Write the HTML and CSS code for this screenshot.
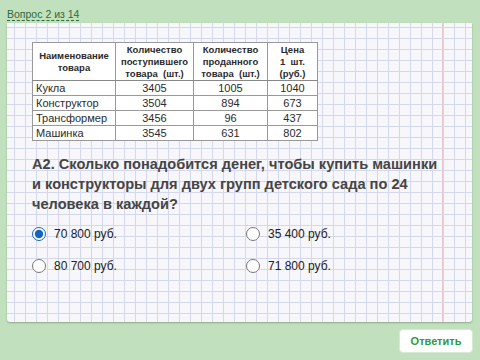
FILE: index.html
```html
<!DOCTYPE html>
<html lang="ru">
<head>
  <meta charset="UTF-8" />
  <title>Тест</title>
  <link rel="stylesheet" href="styles.css">
</head>
<body>
  <div class="top">
    <a class="counter" href="#">Вопрос 2 из 14</a>
  </div>
  <div class="paper">
    <table class="goods">
      <tr>
        <th class="c1">Наименование<br>товара</th>
        <th class="c2">Количество<br>поступившего<br>товара&nbsp; (шт.)</th>
        <th class="c3">Количество<br>проданного<br>товара&nbsp; (шт.)</th>
        <th class="c4">Цена<br>1&nbsp; шт.<br>(руб.)</th>
      </tr>
      <tr><td>Кукла</td><td>3405</td><td>1005</td><td>1040</td></tr>
      <tr><td>Конструктор</td><td>3504</td><td>894</td><td>673</td></tr>
      <tr><td>Трансформер</td><td>3456</td><td>96</td><td>437</td></tr>
      <tr><td>Машинка</td><td>3545</td><td>631</td><td>802</td></tr>
    </table>
    <p class="question">А2. Сколько понадобится денег, чтобы купить машинки<br>и конструкторы для двух групп детского сада по 24<br>человека в каждой?</p>
    <div class="answers">
      <label class="answer"><input type="radio" name="a" checked><span>70 800 руб.</span></label>
      <label class="answer"><input type="radio" name="a"><span>35 400 руб.</span></label>
      <label class="answer"><input type="radio" name="a"><span>80 700 руб.</span></label>
      <label class="answer"><input type="radio" name="a"><span>71 800 руб.</span></label>
    </div>
  </div>
  <div class="footer">
    <button class="submit">Ответить</button>
  </div>
</body>
</html>
```

FILE: styles.css
```css
:root {
  --green-bg: #c1e0bd;
  --paper: #f6f6fb;
  --grid: #d3d8ec;
  --text: #454545;
}
body {
  margin: 0;
  height: 360px;
  font-family: "Liberation Sans", Arial, sans-serif;
  background: var(--green-bg);
  color: var(--text);
  overflow: hidden;
}
.top {
  height: 23px;
  padding-left: 7px;
  box-sizing: border-box;
  padding-top: 4px;
}
.counter {
  font-size: 10.5px;
  color: #2f6a3a;
  text-decoration: none;
  border-bottom: 1px dashed #2f6a3a;
}
.paper {
  margin: 0 8px 0 7px;
  height: 299px;
  box-sizing: border-box;
  padding: 19px 0 0 25px;
  background-color: var(--paper);
  background-image:
    linear-gradient(to right, transparent 435px, #e8c6d0 435px, #e8c6d0 436px, transparent 436px),
    linear-gradient(to right, var(--grid) 1px, transparent 1px),
    linear-gradient(to bottom, var(--grid) 1px, transparent 1px);
  background-size: 100% 100%, 11px 11px, 11px 11px;
  background-position: 0 0, 7px 0, 0 4px;
  box-shadow: 0 1px 2px rgba(0, 0, 0, 0.25);
  border-radius: 0 0 3px 3px;
}
.goods {
  border-collapse: collapse;
  background: #fff;
  border: 1px solid #555;
  font-size: 11px;
  color: #2b2b2b;
}
.goods th {
  font-size: 9.5px;
  font-weight: bold;
  line-height: 12px;
  height: 37px;
  padding: 0;
  border: 1px solid #999;
  border-bottom-color: #888;
}
.goods .c1 { width: 82px; }
.goods .c2 { width: 77px; }
.goods .c3 { width: 73px; }
.goods .c4 { width: 49px; }
.goods td {
  height: 14px;
  padding: 0;
  text-align: center;
  border: 1px solid #999;
}
.goods td:first-child {
  text-align: left;
  padding-left: 3px;
}
.question {
  margin: 13px 0 0;
  font-size: 14.6px;
  font-weight: bold;
  line-height: 20px;
  white-space: nowrap;
  color: var(--text);
}
.answers {
  display: grid;
  grid-template-columns: 214px 200px;
  grid-auto-rows: 32px;
  margin-top: 4px;
}
.answer {
  display: flex;
  align-items: center;
  gap: 8px;
  font-size: 12px;
  color: #222;
}
.answer input {
  width: 14px;
  height: 14px;
  margin: 0;
  accent-color: #1565c0;
}
.footer {
  display: flex;
  justify-content: flex-end;
  padding: 7px 7px 0 0;
}
.submit {
  width: 74px;
  height: 24px;
  background: #fff;
  border: 1px solid #d8e8d6;
  border-radius: 4px;
  color: #2e9a3e;
  font-family: "Liberation Sans", Arial, sans-serif;
  font-size: 11px;
  font-weight: bold;
  cursor: pointer;
}
```
